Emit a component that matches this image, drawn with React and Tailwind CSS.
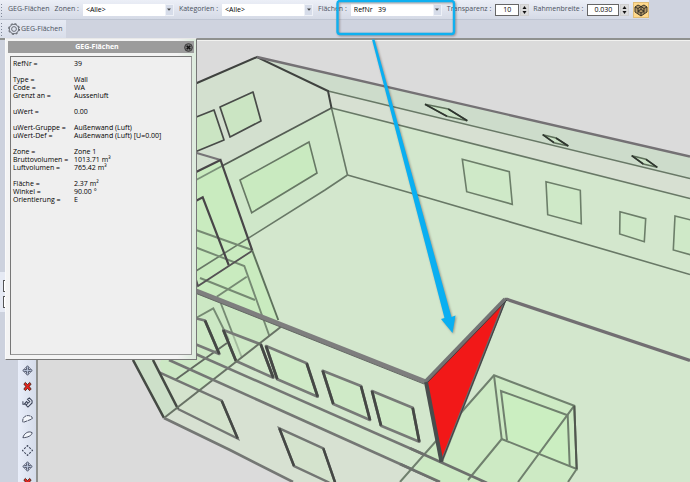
import React from 'react';

const FilterSelect = ({ id, label, options }) => (
  <div className="flex items-center gap-1">
    <label htmlFor={id} className="whitespace-nowrap">{label} :</label>
    <div className="relative flex">
      <select id={id} className="appearance-none w-[91px] h-3 pl-[3px] bg-white text-black leading-3 outline-none">
        {options.map((option) => (
          <option key={option}>{option}</option>
        ))}
      </select>
      <span className="absolute right-0 top-0 w-[9px] h-3 bg-[#d6dce9] border border-[#eef1f7] flex items-center justify-center pointer-events-none">
        <svg viewBox="0 0 4 3" className="w-1 h-[3px]"><path d="M0 0.5h4L2 2.8z" fill="#444" /></svg>
      </span>
    </div>
  </div>
);

const NumberField = ({ id, label, value, inputClass }) => (
  <div className="flex items-center gap-1">
    <label htmlFor={id} className="whitespace-nowrap">{label} :</label>
    <div className="flex gap-px">
      <input id={id} defaultValue={value} className={`${inputClass} h-3 border border-[#666] bg-white text-black text-center outline-none`} />
      <div className="flex flex-col w-[9px] bg-[#dcdcdc] border border-[#d0d0d0]">
        <button aria-label={`${label} erhöhen`} className="h-[5px] flex items-center justify-center">
          <svg viewBox="0 0 4 3" className="w-[5px] h-[3px]"><path d="M0 3h4L2 0z" fill="#111" /></svg>
        </button>
        <button aria-label={`${label} verringern`} className="h-[5px] flex items-center justify-center">
          <svg viewBox="0 0 4 3" className="w-[5px] h-[3px]"><path d="M0 0h4L2 3z" fill="#111" /></svg>
        </button>
      </div>
    </div>
  </div>
);

const Grip = () => (
  <svg viewBox="0 0 2 14" className="w-[2px] h-[14px] shrink-0" fill="#7f8798">
    <path d="M0 1h1v1H0zM0 4h1v1H0zM0 7h1v1H0zM0 10h1v1H0zM0 13h1v1H0z" />
  </svg>
);

const Toolbar = () => (
  <header className="bg-[#cfd3df] text-[#4b5260] border-b-2 border-[#8f918f]">
    <div className="w-fit h-5 flex items-center gap-[5px] pl-px bg-linear-to-b from-[#eceff7] to-[#d5dae6] border-b border-[#bfc5d2]">
      <div className="flex items-center gap-[5px]">
        <Grip />
        <span className="whitespace-nowrap">GEG-Flächen</span>
      </div>
      <FilterSelect id="zonen" label="Zonen" options={['<Alle>', 'Zone 1']} />
      <FilterSelect id="kategorien" label="Kategorien" options={['<Alle>', 'Wall']} />
      <FilterSelect id="flaechen" label="Flächen" options={['RefNr\u00a0\u00a0\u00a039']} />
      <div className="flex items-center gap-1">
        <NumberField id="transparenz" label="Transparenz" value="10" inputClass="w-6" />
        <NumberField id="rahmenbreite" label="Rahmenbreite" value="0.030" inputClass="w-8" />
        <button aria-label="3D-Ansicht" className="w-4 h-4 bg-[#ffd98c] border border-[#e0bd78] flex items-center justify-center">
          <svg viewBox="0 0 14 14" className="w-[14px] h-[14px]" fill="#b59a68" stroke="#2c2922" strokeWidth="0.9">
            <path d="M1 4l3-2 3 1.500 3-1.500 3 2v5l-6 4-6-4z" />
            <path d="M1 4l3 1.500 3-2 3 2 3-1.500M4 5.500v5M10 5.500v5M7 3.500v3M4 8l3-1.500 3 1.500-3 2zM7 10v3" fill="none" />
          </svg>
        </button>
      </div>
    </div>
    <div className="flex h-[18px]">
      <button className="flex items-center gap-[5px] pl-px pr-1 bg-linear-to-b from-[#e6eaf4] to-[#d9deea]">
        <Grip />
        <span className="flex items-center gap-px whitespace-nowrap">
          <svg viewBox="0 0 12 12" className="w-3 h-3" fill="none" stroke="#50545c">
            <circle cx="6" cy="6" r="4.700" strokeWidth="0.800" />
            <circle cx="6" cy="6" r="5.400" strokeWidth="1" strokeDasharray="2.100 2.140" />
            <circle cx="6" cy="6" r="2.400" strokeWidth="0.800" />
          </svg>
          GEG-Flächen
        </span>
      </button>
    </div>
  </header>
);

const MoveIcon = () => (
  <path d="M6 0.800L8 3H7v2h2V4l2.200 2L9 8V7H7v2h1l-2 2.200L4 9h1V7H3v1L0.800 6 3 4v1h2V3H4z" fill="#bcc8de" stroke="#3b4256" strokeWidth="0.9" />
);
const DeleteIcon = () => (
  <path d="M2 3.200L3.700 1.500 6 4l2.300-2.500L10 3.200 7.900 6 10 8.800 8.300 10.500 6 8l-2.300 2.500L2 8.800 4.100 6z" fill="#e32420" stroke="#421" strokeWidth="0.9" />
);

const tools = [
  { name: 'Verschieben', icon: <MoveIcon /> },
  { name: 'Löschen', icon: <DeleteIcon /> },
  { name: 'Drehen', icon: <path d="M1 4.500v3.500h3L3 7l2-2 1.500 1.500L4.500 9l2 2 4.500-4.500V4L8 1 6 2.500 8.500 5 7 6.500" fill="none" stroke="#3b4256" strokeWidth="1.1" /> },
  { name: 'Bogen', icon: <path d="M1 10C-0.500 4 6 0.500 11 4.500v2L2 10z" fill="#f3f6fb" stroke="#3b4256" strokeWidth="1" strokeDasharray="4 0.600" /> },
  { name: 'Segment', icon: <path d="M1 9.500C2 5 7 1.500 11 4c0 3-5 5.500-10 5.500z" fill="#f3f6fb" stroke="#3b4256" strokeWidth="1" /> },
  { name: 'Raute', icon: <path d="M6 0.600L11.400 6 6 11.400 0.600 6z" fill="none" stroke="#3b4256" strokeWidth="1.1" strokeDasharray="2.400 1.400" strokeDashoffset="1.200" /> },
  { name: 'Verschieben 2', icon: <MoveIcon /> },
  { name: 'Löschen 2', icon: <DeleteIcon /> },
];

const ToolStrip = () => (
  <aside className="w-[38px] shrink-0 flex justify-between bg-[#cdd2de] border-r-2 border-[#8f918f]">
    <div className="pt-[232px]">
      <div className="w-[6px] h-10 bg-[#e6eaf4] flex flex-col gap-1 pt-2 items-end">
        <span className="w-[3px] h-3 border border-r-0 border-[#555] bg-white" />
        <span className="w-[3px] h-3 border border-r-0 border-[#555] bg-white" />
      </div>
    </div>
    <nav className="w-[18px] pt-[322px] flex flex-col items-center bg-linear-to-r from-[#e9eefa] to-[#d5dcea]">
      {tools.map((tool) => (
        <button key={tool.name} aria-label={tool.name} className="w-4 h-4 shrink-0 flex items-center justify-center">
          <svg viewBox="0 0 12 12" className="w-[11px] h-[11px]">{tool.icon}</svg>
        </button>
      ))}
    </nav>
  </aside>
);

// Building model, drawn in window coordinates
const Scene = () => (
  <svg viewBox="38 40 652 442" preserveAspectRatio="xMinYMin slice" className="w-full h-full block">
    <path d="M38 40h652v442H38z" fill="#dbdbdb" />
    <path d="M38 40h652v1H38z" fill="#f2f2f0" />
    <path d="M133 360L120 335V115L257 57 690 156.500V482H293L164 418z" fill="#d3e7cd" />
    <path d="M257 57L690 156.500V178.500L328 91z" fill="#cddccb" />
    <path d="M328 91L690 178.500V198.500L331.500 108z" fill="#d7e0d2" />
    <path d="M190 86L257 57 328 91 331.500 108 190 182z" fill="#d3e0cf" />
    <path d="M331.500 108L347.500 175 190 276V182z" fill="#cfe7c9" />
    <path d="M190 175L220.500 160 278.300 320V328L190 292z" fill="#c9ebbf" />
    <path d="M133 360h36L440 482H293L164 418z" fill="#d7e1d2" />
    <path d="M190 292L280 327 190 398 169 385 159 365z" fill="#cce8c4" />
    <path d="M133 360h20L178 409 164 418z" fill="#cde0c9" />

    <g fill="#cbe5c3" stroke="#484b48" strokeWidth="1.700" strokeLinejoin="round">
      <path d="M190 119.500L214 110 224 140 190 154" />
      <path d="M220 107L253 92 261 121 230 137z" />
    </g>
    <g fill="#c9eac0" stroke="#677864" strokeWidth="1.600">
      <path d="M240 180L309 142 317 173 251.700 212.700z" />
    </g>
    <g fill="#cfe9c8" stroke="#6c7e69" strokeWidth="1.600">
      <path d="M462.300 159.300L509.300 171.700 512.300 204.300 466.700 191.700z" />
      <path d="M546 181.700L580.300 190.300 581.300 223.700 547.700 214.700z" />
      <path d="M620 211.700L645.700 218.700 644.300 241.700 619.700 234z" />
      <path d="M695 221L675 216 673.300 250 695 256" />
    </g>
    <g fill="#cbe2c6" stroke="#5e705b" strokeWidth="1.500">
      <path d="M425 104.300L448.300 109 467.300 120.700 447 116.300z" />
      <path d="M542.700 134.700L556 138 568.300 146 554 142.700z" />
      <path d="M631.700 155.700L646 159.300 657.300 167.300 643.300 164z" />
      <path d="M425 104.300L447 116.300M448.300 109L467.300 120.700M542.700 134.700L554 142.700M556 138L568.300 146M631.700 155.700L643.300 164M646 159.300L657.300 167.300" stroke="#2f352f" strokeWidth="1.600" />
    </g>

    <g fill="none" stroke="#687866" strokeWidth="1.600">
      <path d="M328 91L690 178.500" />
      <path d="M331.500 108L690 198.500" />
      <path d="M347.500 175L430 198.500 690 274.500" />
      <path d="M347.500 175L325 190 196 271" />
      <path d="M331.500 108L347.500 175" />
    </g>
    <path d="M196 180L222 166" stroke="#7c927a" strokeWidth="1.800" />
    <path d="M331.500 108L222 166" stroke="#555d54" strokeWidth="1.800" />
    <path d="M190 86L257 57 328 91 331.500 108" fill="none" stroke="#3f423f" strokeWidth="2" />
    <path d="M257 57L690 156.500" stroke="#747174" strokeWidth="2.400" />

    {/* annex on the left */}
    <g fill="none" stroke="#768a73" strokeWidth="1.900">
      <path d="M196 230L252 250" />
      <path d="M196 247.500L244.300 266 269.300 335.700" />
      <path d="M200 278L255 300" />
      <path d="M216.700 296.700L246.700 276.700" />
      <path d="M196 318L213.300 308.300 229 340" />
      <path d="M220.700 303L242 358" />
      <path d="M227 343L168 385" stroke="#61695f" />
    </g>
    <path d="M190 151L220.500 160" stroke="#777577" strokeWidth="2" />
    <g fill="none" stroke="#484548" strokeWidth="2.200">
      <path d="M190 175L220.500 160 252.300 250.700" />
      <path d="M252.300 250.700L198 286 195 276" stroke="#555255" strokeWidth="1.800" />
      <path d="M190 204L202.700 197.300 228.700 265" />
      <path d="M252.300 250.700L278.300 320" stroke="#5e705c" strokeWidth="1.900" />
    </g>

    {/* front wall openings */}
    <g fill="#cfeac7" stroke="#777a77" strokeWidth="2.600" strokeLinejoin="round">
      <path d="M223.300 330L260.700 344.300 273.300 377.700 236 361z" fillOpacity="0.500" />
      <path d="M266 346L306.700 363.300 317.700 396.700 277.300 379.300z" />
      <path d="M322.700 370.700L361 386 370 420 333.300 404z" />
      <path d="M372 391L412.700 407.700 419.300 441.700 381 425.700z" />
      <path d="M190 317L205 320.500 219.300 354 190 342" fillOpacity="0.500" />
    </g>
    <path d="M223.300 330L236 361M260.700 344.300L273.300 377.700M266 346L277.300 379.300M306.700 363.300L317.700 396.700M322.700 370.700L333.300 404M361 386L370 420M372 391L381 425.700M412.700 407.700L419.300 441.700M205 320.500L219.300 354" stroke="#454845" strokeWidth="2.800" />
    <g fill="#d4e3cd" stroke="#737673" strokeWidth="2.400">
      <path d="M159.300 372.300L221.700 400.700 237.700 438.500 178 409" />
      <path d="M337 488L328 482 294 466 279.300 428.300 323.300 448.300 337 488" />
    </g>
    <path d="M221.700 400.700L237.700 438.500M294 466L279.300 428.300M323.300 448.300L337 488" stroke="#454845" strokeWidth="2.500" />
    <path d="M133 360L164 418M153 360L178 409" stroke="#454a44" strokeWidth="2.600" />
    <path d="M280.700 327L164 418" stroke="#687265" strokeWidth="2" />
    <g fill="none" stroke="#747774" strokeWidth="2.600">
      <path d="M164 418L230 450 293 482" />
      <path d="M169 360L440 482" />
      <path d="M190 351.500L441 462" />
    </g>

    {/* recessed box */}
    <path d="M494 375.300L574.300 405.700 576.700 469 568 482H487L441 462 435 443z" fill="#cdeac4" />
    <path d="M435 443L441 462 487 482H440L414 470z" fill="#cdeac4" />
    <path d="M501 391L567.700 415.300 569.700 466 507 440z" fill="#cbeec1" />
    <g fill="none" stroke="#70806e" strokeWidth="2">
      <path d="M400 482L494 375.300 574.300 405.700 576.700 469 501.700 439 468 480" />
      <path d="M494 375.300L501.700 439M507 440L501 391 567.700 415.300 569.700 466" />
      <path d="M574.300 405.700L518 482M576.700 469L568 482" />
      <path d="M574.300 405.700L576.700 469" stroke="#51574f" />
    </g>
    <path d="M410 448.300L487 483M400 464L440 482" stroke="#6d706d" strokeWidth="2.700" />

    <path d="M506 299L690 360.500" stroke="#726f72" strokeWidth="3.300" />
    <path d="M190 288.500L426 382" stroke="#7e7e7e" strokeWidth="4.800" />
    <path d="M190 291L424 384" stroke="#646864" strokeWidth="1" />
    <path d="M506 298L426 382 441.500 462z" fill="#f21818" />
    <path d="M506 298L441.500 462" stroke="#6a6b6b" strokeWidth="2.400" />
    <path d="M505 299L425 382" stroke="#737575" strokeWidth="3.800" />
    <path d="M507 300L427 383M505 302L442 461" stroke="#3e4242" strokeWidth="1" />
    <path d="M426 382L441.500 462" stroke="#484d4d" strokeWidth="4" />
  </svg>
);

const groups = [
  [['RefNr', '39']],
  [['Type', 'Wall'], ['Code', 'WA'], ['Grenzt an', 'Aussenluft']],
  [['uWert', '0.00']],
  [['uWert-Gruppe', 'Außenwand (Luft)'], ['uWert-Def', 'Außenwand (Luft) [U=0.00]']],
  [['Zone', 'Zone 1'], ['Bruttovolumen', '1013.71 m³'], ['Luftvolumen', '765.42 m³']],
  [['Fläche', '2.37 m²'], ['Winkel', '90.00 °'], ['Orientierung', 'E']],
];

const InfoWindow = () => (
  <section className="absolute left-[5px] top-[38px] w-48 p-[2px] pb-1 bg-linear-to-r from-[#f4f4f4] from-90% to-[#dcebdc] border border-l-[#fafafa] border-t-[#e8e8e8] border-r-[#777] border-b-[#777]">
    <div className="h-3 bg-[#9c9c9c] flex items-center text-white font-bold">
      <h1 className="flex-1 pl-1 text-center">GEG-Flächen</h1>
      <button aria-label="Schließen" className="w-3 h-3 flex items-center justify-center">
        <svg viewBox="0 0 10 10" className="w-[9px] h-[9px]">
          <circle cx="5" cy="5" r="4.300" fill="#777" stroke="#333" strokeWidth="1" />
          <path d="M3 3l4 4M7 3l-4 4" stroke="#111" strokeWidth="1.600" />
        </svg>
      </button>
    </div>
    <div className="mt-[3px] mx-[2px] min-h-[299px] p-px pl-[2px] pt-[3px] flex flex-col gap-2 bg-[#efefef] border border-t-[#777] border-l-[#777] border-r-[#999] border-b-[#999] text-black">
      {groups.map((rows) => (
        <dl key={rows[0][0]} className="leading-2">
          {rows.map(([name, value]) => (
            <div key={name} className="flex">
              <dt className="w-[61px] shrink-0 whitespace-nowrap">{name} =</dt>
              <dd className="whitespace-nowrap">{value}</dd>
            </div>
          ))}
        </dl>
      ))}
    </div>
  </section>
);

// Highlight frame and arrow laid over the window
const Callout = () => (
  <svg viewBox="0 0 690 482" preserveAspectRatio="xMinYMin slice" className="absolute inset-0 w-full h-full pointer-events-none drop-shadow-[1px_1px_1px_rgba(90,70,60,0.5)]">
    <rect x="337.500" y="1" width="116.500" height="33" rx="2.500" fill="none" stroke="#0fb0f0" strokeWidth="2.400" />
    <path d="M372 39.500H374.500L451.500 317 455.500 315.500 452.500 333 441 319 444.500 318z" fill="#0aaff1" />
  </svg>
);

const App = () => {
  return (
    <div className="relative h-screen overflow-hidden flex flex-col font-['Open_Sans',sans-serif] text-[7px]">
      <Toolbar />
      <main className="flex-1 min-h-0 flex">
        <ToolStrip />
        <div className="flex-1 min-w-0 overflow-hidden">
          <Scene />
        </div>
      </main>
      <InfoWindow />
      <Callout />
    </div>
  );
};

export default App;
